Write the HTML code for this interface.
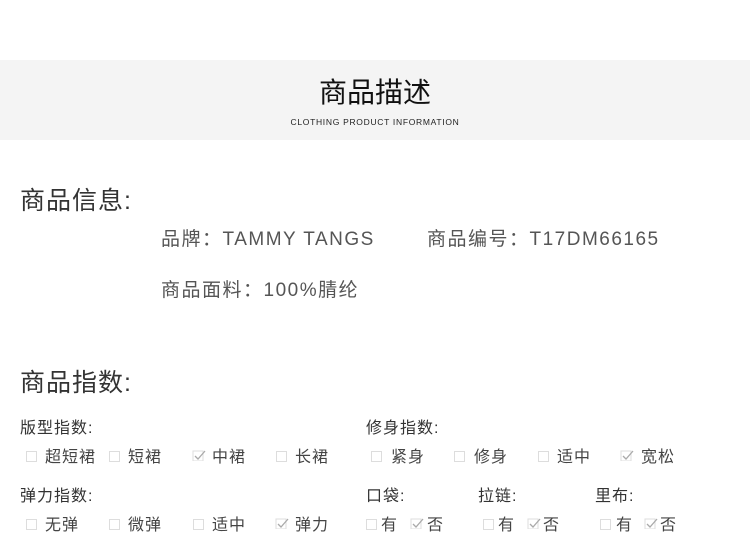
<!DOCTYPE html>
<html><head><meta charset="utf-8"><style>
body{margin:0;width:750px;height:536px;background:#fff;position:relative;overflow:hidden;font-family:"Liberation Sans","Noto Sans CJK SC",sans-serif;color:#333}
.a{position:absolute;white-space:nowrap;line-height:1}
.band{position:absolute;left:0;top:60px;width:750px;height:80px;background:#f4f4f4}
.cb{position:absolute;width:11px;height:11px;border:1px solid #ddd;box-sizing:border-box;background:#fff}
.ck{position:absolute;width:14px;height:12px}
.l{font-size:16px;color:#333;letter-spacing:1px}
.o{font-size:16px;color:#444;letter-spacing:1px}
.m{font-size:19px;color:#555;letter-spacing:1.5px}
.h{font-size:25px;color:#333;letter-spacing:1px}
</style></head><body>
<div class="band"></div>
<div class="a" style="left:0;width:750px;text-align:center;top:79px;font-size:28px;color:#111">商品描述</div>
<div class="a" style="left:0;width:750px;text-align:center;top:118px;font-size:8.5px;color:#222;letter-spacing:0.7px">CLOTHING PRODUCT INFORMATION</div>

<div class="a h" style="left:20px;top:189px">商品信息:</div>
<div class="a m" style="left:161px;top:230px">品牌：TAMMY TANGS</div>
<div class="a m" style="left:427px;top:230px">商品编号：T17DM66165</div>
<div class="a m" style="left:161px;top:281px">商品面料：100%腈纶</div>

<div class="a h" style="left:20px;top:371px">商品指数:</div>

<div class="a l" style="left:20px;top:421px">版型指数:</div>
<div class="a l" style="left:366px;top:421px">修身指数:</div>
<div class="a l" style="left:20px;top:489px">弹力指数:</div>
<div class="a l" style="left:366px;top:489px">口袋:</div>
<div class="a l" style="left:478px;top:489px">拉链:</div>
<div class="a l" style="left:595px;top:489px">里布:</div>

<!-- row 1 -->
<div class="cb" style="left:26px;top:451px"></div><div class="a o" style="left:45px;top:450px">超短裙</div>
<div class="cb" style="left:109px;top:451px"></div><div class="a o" style="left:128px;top:450px">短裙</div>
<svg class="ck" style="left:192px;top:449px" viewBox="0 0 14 12"><rect x="1" y="2" width="10" height="10" fill="none" stroke="#ddd"/><path d="M3 7l3 3 7-8" fill="none" stroke="#aaa" stroke-width="1.3"/></svg><div class="a o" style="left:212px;top:450px">中裙</div>
<div class="cb" style="left:276px;top:451px"></div><div class="a o" style="left:295px;top:450px">长裙</div>

<div class="cb" style="left:371px;top:451px"></div><div class="a o" style="left:391px;top:450px">紧身</div>
<div class="cb" style="left:454px;top:451px"></div><div class="a o" style="left:474px;top:450px">修身</div>
<div class="cb" style="left:538px;top:451px"></div><div class="a o" style="left:557px;top:450px">适中</div>
<svg class="ck" style="left:620px;top:449px" viewBox="0 0 14 12"><rect x="1" y="2" width="10" height="10" fill="none" stroke="#ddd"/><path d="M3 7l3 3 7-8" fill="none" stroke="#aaa" stroke-width="1.3"/></svg><div class="a o" style="left:641px;top:450px">宽松</div>

<!-- row 2 -->
<div class="cb" style="left:26px;top:519px"></div><div class="a o" style="left:45px;top:518px">无弹</div>
<div class="cb" style="left:109px;top:519px"></div><div class="a o" style="left:128px;top:518px">微弹</div>
<div class="cb" style="left:193px;top:519px"></div><div class="a o" style="left:212px;top:518px">适中</div>
<svg class="ck" style="left:275px;top:517px" viewBox="0 0 14 12"><rect x="1" y="2" width="10" height="10" fill="none" stroke="#ddd"/><path d="M3 7l3 3 7-8" fill="none" stroke="#aaa" stroke-width="1.3"/></svg><div class="a o" style="left:295px;top:518px">弹力</div>

<div class="cb" style="left:366px;top:519px"></div><div class="a o" style="left:381px;top:518px">有</div>
<svg class="ck" style="left:410px;top:517px" viewBox="0 0 14 12"><rect x="1" y="2" width="10" height="10" fill="none" stroke="#ddd"/><path d="M3 7l3 3 7-8" fill="none" stroke="#aaa" stroke-width="1.3"/></svg><div class="a o" style="left:427px;top:518px">否</div>
<div class="cb" style="left:483px;top:519px"></div><div class="a o" style="left:498px;top:518px">有</div>
<svg class="ck" style="left:527px;top:517px" viewBox="0 0 14 12"><rect x="1" y="2" width="10" height="10" fill="none" stroke="#ddd"/><path d="M3 7l3 3 7-8" fill="none" stroke="#aaa" stroke-width="1.3"/></svg><div class="a o" style="left:543px;top:518px">否</div>
<div class="cb" style="left:600px;top:519px"></div><div class="a o" style="left:616px;top:518px">有</div>
<svg class="ck" style="left:644px;top:517px" viewBox="0 0 14 12"><rect x="1" y="2" width="10" height="10" fill="none" stroke="#ddd"/><path d="M3 7l3 3 7-8" fill="none" stroke="#aaa" stroke-width="1.3"/></svg><div class="a o" style="left:660px;top:518px">否</div>
</body></html>
